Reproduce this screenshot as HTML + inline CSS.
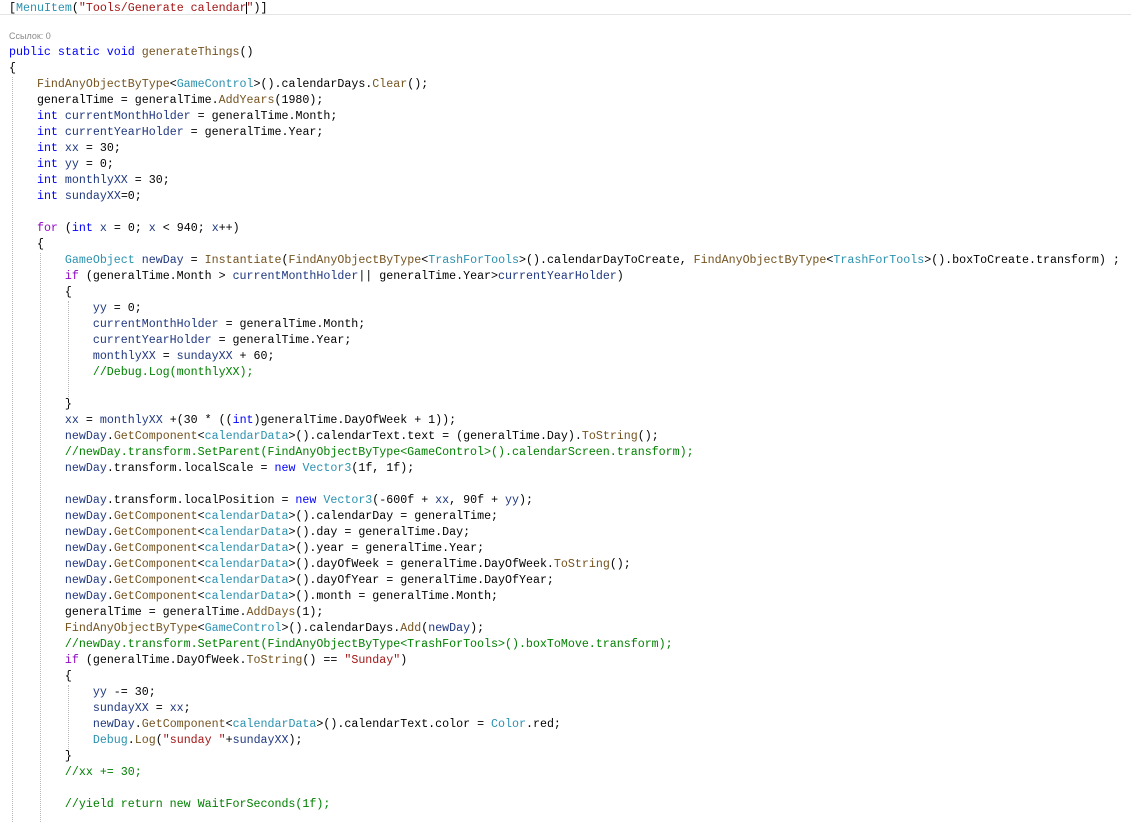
<!DOCTYPE html>
<html><head><meta charset="utf-8"><style>
html,body{margin:0;padding:0;background:#fff;width:1131px;height:820px;overflow:hidden}
.code{position:absolute;left:9px;top:45px;font-family:"Liberation Mono",monospace;font-size:11.65px;line-height:16px;color:#000}
.l{height:16px;white-space:pre}
.k{color:#0000ff}.t{color:#2b91af}.m{color:#74531f}.v{color:#1f377f}.s{color:#a31515}.c{color:#008000}.p{color:#8f08c4}
.top{position:absolute;left:9px;top:1px;font-family:"Liberation Mono",monospace;font-size:11.65px;line-height:16px;white-space:pre}
.sep{position:absolute;left:0;top:14px;width:1131px;height:1px;background:#e4e4e4}
.lens{position:absolute;left:9px;top:31px;font-family:"Liberation Sans",sans-serif;font-size:9px;color:#8a8a8a}
.g{position:absolute;width:0;border-left:1px dotted #b8b8b8}
</style></head><body>
<div class="top"><span>[</span><span class="t">MenuItem</span>(<span class="s">"Tools/Generate calendar</span><span style="border-left:1px solid #000;margin-left:-1px"></span><span class="s">"</span>)]</div>
<div class="sep"></div>
<div class="lens">Ссылок: 0</div>
<div class="g" style="left:12px;top:77px;height:745px"></div>
<div class="g" style="left:40px;top:253px;height:569px"></div>
<div class="g" style="left:68px;top:301px;height:96px"></div>
<div class="g" style="left:68px;top:685px;height:64px"></div>
<div class="code"><div class="l"><span class="k">public static void</span> <span class="m">generateThings</span>()</div><div class="l">{</div><div class="l">    <span class="m">FindAnyObjectByType</span>&lt;<span class="t">GameControl</span>&gt;().calendarDays.<span class="m">Clear</span>();</div><div class="l">    generalTime = generalTime.<span class="m">AddYears</span>(1980);</div><div class="l">    <span class="k">int</span> <span class="v">currentMonthHolder</span> = generalTime.Month;</div><div class="l">    <span class="k">int</span> <span class="v">currentYearHolder</span> = generalTime.Year;</div><div class="l">    <span class="k">int</span> <span class="v">xx</span> = 30;</div><div class="l">    <span class="k">int</span> <span class="v">yy</span> = 0;</div><div class="l">    <span class="k">int</span> <span class="v">monthlyXX</span> = 30;</div><div class="l">    <span class="k">int</span> <span class="v">sundayXX</span>=0;</div><div class="l"> </div><div class="l">    <span class="p">for</span> (<span class="k">int</span> <span class="v">x</span> = 0; <span class="v">x</span> &lt; 940; <span class="v">x</span>++)</div><div class="l">    {</div><div class="l">        <span class="t">GameObject</span> <span class="v">newDay</span> = <span class="m">Instantiate</span>(<span class="m">FindAnyObjectByType</span>&lt;<span class="t">TrashForTools</span>&gt;().calendarDayToCreate, <span class="m">FindAnyObjectByType</span>&lt;<span class="t">TrashForTools</span>&gt;().boxToCreate.transform) ;</div><div class="l">        <span class="p">if</span> (generalTime.Month &gt; <span class="v">currentMonthHolder</span>|| generalTime.Year&gt;<span class="v">currentYearHolder</span>)</div><div class="l">        {</div><div class="l">            <span class="v">yy</span> = 0;</div><div class="l">            <span class="v">currentMonthHolder</span> = generalTime.Month;</div><div class="l">            <span class="v">currentYearHolder</span> = generalTime.Year;</div><div class="l">            <span class="v">monthlyXX</span> = <span class="v">sundayXX</span> + 60;</div><div class="l">            <span class="c">//Debug.Log(monthlyXX);</span></div><div class="l"> </div><div class="l">        }</div><div class="l">        <span class="v">xx</span> = <span class="v">monthlyXX</span> +(30 * ((<span class="k">int</span>)generalTime.DayOfWeek + 1));</div><div class="l">        <span class="v">newDay</span>.<span class="m">GetComponent</span>&lt;<span class="t">calendarData</span>&gt;().calendarText.text = (generalTime.Day).<span class="m">ToString</span>();</div><div class="l">        <span class="c">//newDay.transform.SetParent(FindAnyObjectByType&lt;GameControl&gt;().calendarScreen.transform);</span></div><div class="l">        <span class="v">newDay</span>.transform.localScale = <span class="k">new</span> <span class="t">Vector3</span>(1f, 1f);</div><div class="l"> </div><div class="l">        <span class="v">newDay</span>.transform.localPosition = <span class="k">new</span> <span class="t">Vector3</span>(-600f + <span class="v">xx</span>, 90f + <span class="v">yy</span>);</div><div class="l">        <span class="v">newDay</span>.<span class="m">GetComponent</span>&lt;<span class="t">calendarData</span>&gt;().calendarDay = generalTime;</div><div class="l">        <span class="v">newDay</span>.<span class="m">GetComponent</span>&lt;<span class="t">calendarData</span>&gt;().day = generalTime.Day;</div><div class="l">        <span class="v">newDay</span>.<span class="m">GetComponent</span>&lt;<span class="t">calendarData</span>&gt;().year = generalTime.Year;</div><div class="l">        <span class="v">newDay</span>.<span class="m">GetComponent</span>&lt;<span class="t">calendarData</span>&gt;().dayOfWeek = generalTime.DayOfWeek.<span class="m">ToString</span>();</div><div class="l">        <span class="v">newDay</span>.<span class="m">GetComponent</span>&lt;<span class="t">calendarData</span>&gt;().dayOfYear = generalTime.DayOfYear;</div><div class="l">        <span class="v">newDay</span>.<span class="m">GetComponent</span>&lt;<span class="t">calendarData</span>&gt;().month = generalTime.Month;</div><div class="l">        generalTime = generalTime.<span class="m">AddDays</span>(1);</div><div class="l">        <span class="m">FindAnyObjectByType</span>&lt;<span class="t">GameControl</span>&gt;().calendarDays.<span class="m">Add</span>(<span class="v">newDay</span>);</div><div class="l">        <span class="c">//newDay.transform.SetParent(FindAnyObjectByType&lt;TrashForTools&gt;().boxToMove.transform);</span></div><div class="l">        <span class="p">if</span> (generalTime.DayOfWeek.<span class="m">ToString</span>() == <span class="s">"Sunday"</span>)</div><div class="l">        {</div><div class="l">            <span class="v">yy</span> -= 30;</div><div class="l">            <span class="v">sundayXX</span> = <span class="v">xx</span>;</div><div class="l">            <span class="v">newDay</span>.<span class="m">GetComponent</span>&lt;<span class="t">calendarData</span>&gt;().calendarText.color = <span class="t">Color</span>.red;</div><div class="l">            <span class="t">Debug</span>.<span class="m">Log</span>(<span class="s">"sunday "</span>+<span class="v">sundayXX</span>);</div><div class="l">        }</div><div class="l">        <span class="c">//xx += 30;</span></div><div class="l"> </div><div class="l">        <span class="c">//yield return new WaitForSeconds(1f);</span></div></div>
</body></html>
